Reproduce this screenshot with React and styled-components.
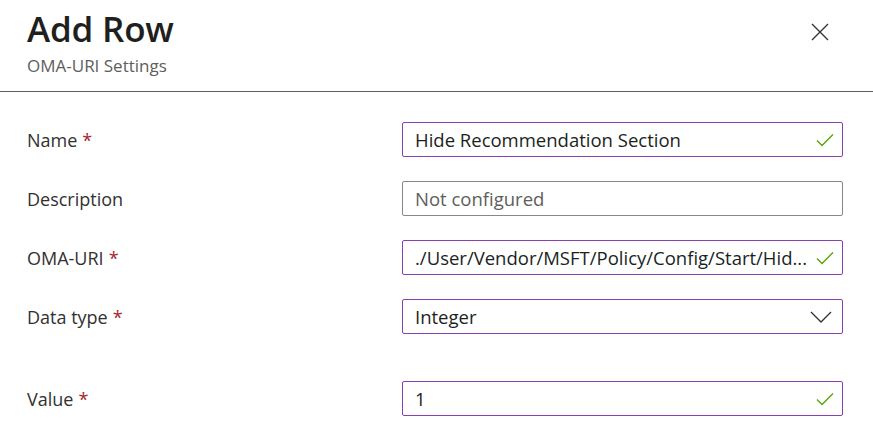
import React from "react";
import styled, { createGlobalStyle } from "styled-components";

const GlobalStyle = createGlobalStyle`
  body {
    margin: 0;
    background: #fff;
    font-family: "Segoe UI", "Open Sans", "Noto Sans", sans-serif;
    color: #323130;
  }
`;

const Page = styled.div`
  width: 873px;
  height: 442px;
  overflow: hidden;
  background: #fff;
`;

const Header = styled.div`
  display: flex;
  justify-content: space-between;
  align-items: flex-start;
  padding: 6px 30px 0 27px;
  height: 92px;
  box-sizing: border-box;
  border-bottom: 1px solid #605e5c;
`;

const Titles = styled.div`
  display: flex;
  flex-direction: column;
`;

const Title = styled.h1`
  margin: 0;
  font-size: 35px;
  line-height: 46px;
  font-weight: 600;
  color: #201f1e;
  letter-spacing: -0.2px;
`;

const Subtitle = styled.div`
  margin-top: 2px;
  font-size: 17px;
  line-height: 24px;
  color: #605e5c;
`;

const CloseButton = styled.button`
  border: 0;
  background: none;
  padding: 0;
  margin: 17px 14px 0 0;
  width: 18px;
  height: 18px;
  cursor: pointer;
  display: flex;
`;

const Form = styled.div`
  display: flex;
  flex-direction: column;
  padding: 30px 30px 0 27px;
`;

const Row = styled.div`
  display: grid;
  grid-template-columns: 375px minmax(0, 1fr);
  align-items: center;
  margin-bottom: ${({ $gap }) => $gap}px;
`;

const Label = styled.label`
  font-size: 18px;
  color: #323130;
`;

const Required = styled.span`
  color: #a4262c;
  margin-left: 5px;
`;

const Field = styled.div`
  display: flex;
  align-items: center;
  height: 35px;
  min-width: 0;
  box-sizing: border-box;
  border: 1px solid ${({ $valid }) => ($valid ? "#8a3fb3" : "#8a8886")};
  border-radius: 2px;
  padding: 0 8px 0 12px;
  gap: 6px;
`;

const Value = styled.span`
  flex: 1;
  min-width: 0;
  font-size: 18.5px;
  color: ${({ $placeholder }) => ($placeholder ? "#605e5c" : "#201f1e")};
  white-space: nowrap;
  overflow: hidden;
`;

const Check = () => (
  <svg width="18" height="14" viewBox="0 0 18 14">
    <path d="M1 7.5 L6 12.5 L17 1.5" fill="none" stroke="#57a300" strokeWidth="1.3" />
  </svg>
);

const Chevron = () => (
  <svg width="22" height="12" viewBox="0 0 22 12" style={{ marginRight: 2 }}>
    <path d="M1 1 L11 11 L21 1" fill="none" stroke="#323130" strokeWidth="1.3" />
  </svg>
);

const rows = [
  { label: "Name", required: true, value: "Hide Recommendation Section", valid: true, icon: "check", gap: 24 },
  { label: "Description", value: "Not configured", placeholder: true, gap: 24 },
  { label: "OMA-URI", required: true, value: "./User/Vendor/MSFT/Policy/Config/Start/Hid...", valid: true, icon: "check", gap: 24 },
  { label: "Data type", required: true, value: "Integer", valid: true, icon: "chevron", gap: 47 },
  { label: "Value", required: true, value: "1", valid: true, icon: "check", gap: 0 },
];

export default function App() {
  return (
    <Page>
      <GlobalStyle />
      <Header>
        <Titles>
          <Title>Add Row</Title>
          <Subtitle>OMA-URI Settings</Subtitle>
        </Titles>
        <CloseButton aria-label="Close">
          <svg width="18" height="18" viewBox="0 0 18 18">
            <path d="M1 1 L17 17 M17 1 L1 17" stroke="#323130" strokeWidth="1.3" />
          </svg>
        </CloseButton>
      </Header>
      <Form>
        {rows.map((r) => (
          <Row key={r.label} $gap={r.gap}>
            <Label>
              {r.label}
              {r.required && <Required>*</Required>}
            </Label>
            <Field $valid={r.valid}>
              <Value $placeholder={r.placeholder}>{r.value}</Value>
              {r.icon === "check" && <Check />}
              {r.icon === "chevron" && <Chevron />}
            </Field>
          </Row>
        ))}
      </Form>
    </Page>
  );
}
